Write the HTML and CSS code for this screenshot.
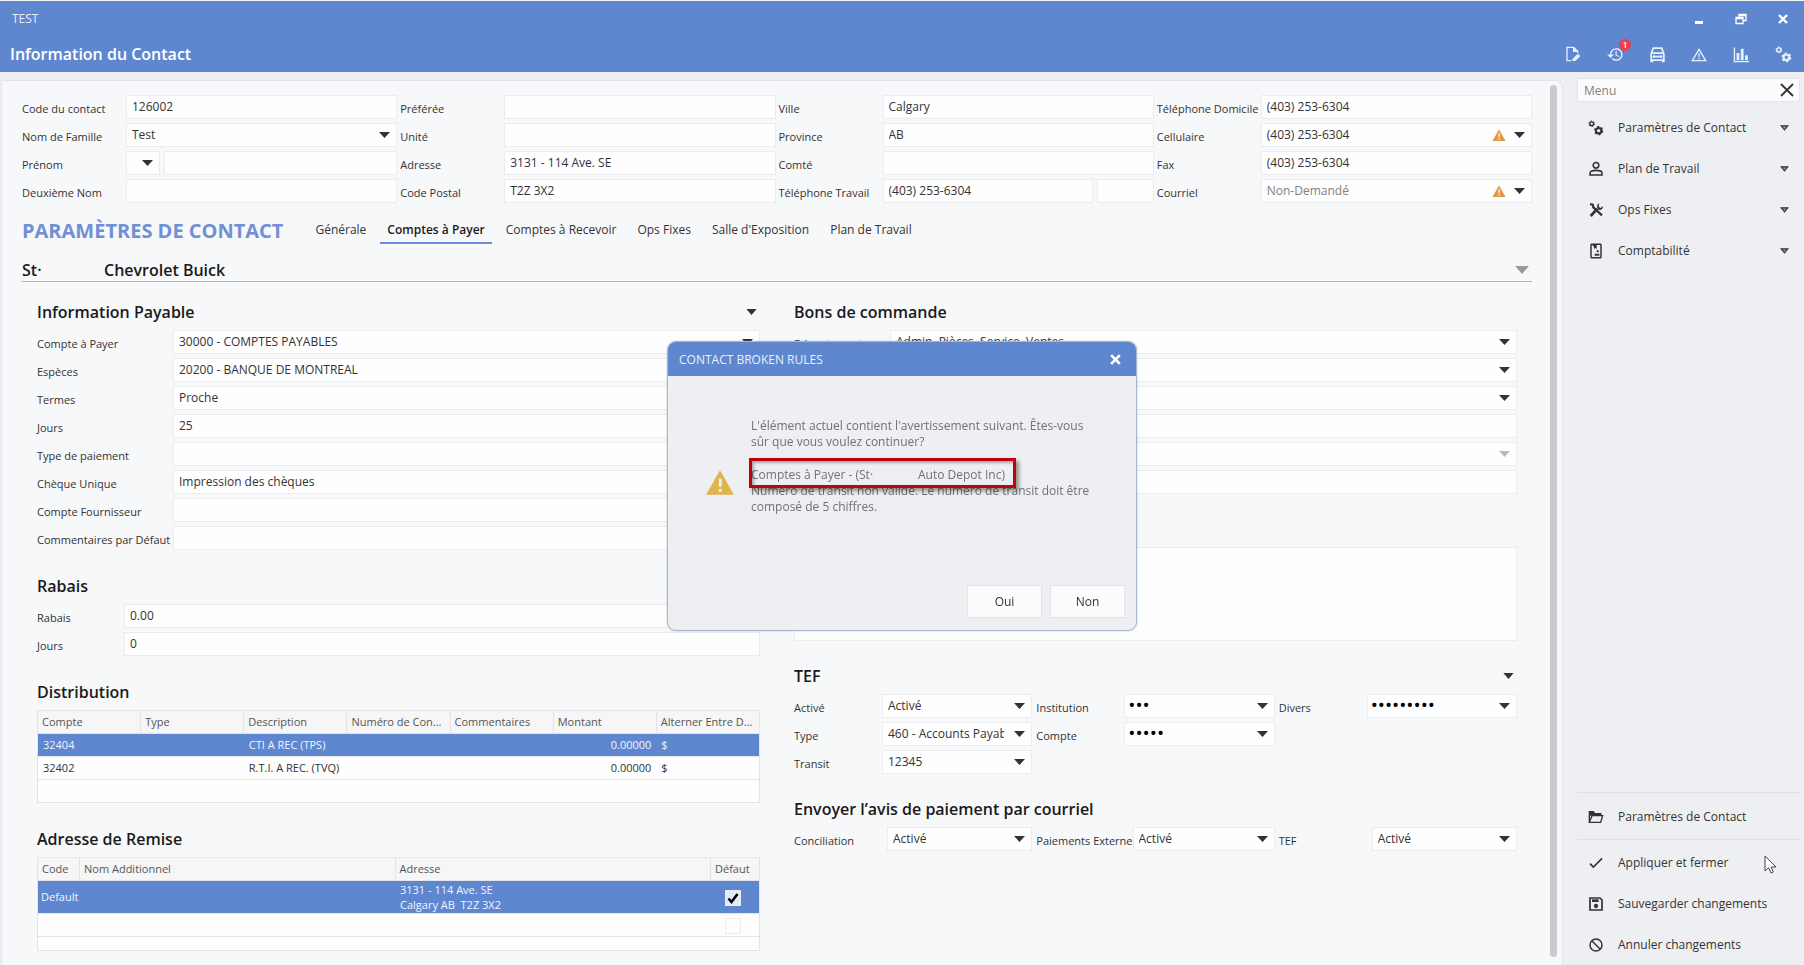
FILE: index.html
```html
<!DOCTYPE html>
<html lang="fr">
<head>
    <meta charset="UTF-8">
    <meta name="viewport" content="width=device-width, initial-scale=1.0">
    <title>Information du Contact</title>
    <link rel="stylesheet" href="styles.css">
</head>
<body>

    <svg class="sprite" aria-hidden="true">
        <symbol id="i-gears" viewBox="0 0 24 24">
            <g fill="none" stroke="currentColor">
                <circle cx="5.500" cy="5.500" r="2.800" stroke-width="2"/>
                <circle cx="5.500" cy="5.500" r="4" stroke-width="1.600" stroke-dasharray="2.100 2.090"/>
                <circle cx="16" cy="16" r="4" stroke-width="3"/>
                <circle cx="16" cy="16" r="6" stroke-width="2" stroke-dasharray="3.300 2.980"/>
            </g>
        </symbol>
        <symbol id="i-warn" viewBox="0 0 24 22">
            <path fill="currentColor" fill-rule="evenodd" d="M12 1L24 22H0zM11 8v7h2.400V8zm0 9v2.400h2.400V17z"/>
        </symbol>
        <symbol id="i-close" viewBox="0 0 12 12">
            <path d="M2 2l8 8M10 2l-8 8" fill="none" stroke="currentColor" stroke-width="2.400"/>
        </symbol>
        <symbol id="i-caret" viewBox="0 0 12 7">
            <path d="M0 0h12L6 7z" fill="currentColor"/>
        </symbol>
        <symbol id="i-caret-open" viewBox="0 0 10 7">
            <path d="M1.200 1h7.600L5 5.600z" fill="#999" stroke="currentColor" stroke-width="1.400"/>
        </symbol>
    </svg>

    <header class="app-header">
        <div class="title-bar">
            <span>TEST</span>
            <div class="bar-buttons">
                <button type="button" aria-label="Réduire"><svg width="12" height="12" viewBox="0 0 12 12"><path d="M2 8h8v3H2z" fill="currentColor"/></svg></button>
                <button type="button" aria-label="Restaurer"><svg width="12" height="12" viewBox="0 0 12 12"><path d="M4 4V1.500h7v6H8M4 2.500h7M1 4.500h7v6H1zM1 5.500h7" fill="none" stroke="currentColor" stroke-width="1.300"/></svg></button>
                <button type="button" aria-label="Fermer"><svg width="12" height="12"><use href="#i-close"/></svg></button>
            </div>
        </div>
        <div class="page-bar">
            <h1>Information du Contact</h1>
            <div class="bar-buttons">
                <button type="button" aria-label="Note"><svg width="16" height="16" viewBox="0 0 24 24"><path d="M9 22H3V2h10l6 6v3M11 22l1-2 7-7" fill="none" stroke="currentColor" stroke-width="2"/><path d="M12 1l8 8h-8zM12 23l1-4 7-7 3 3-7 7z" fill="currentColor"/></svg></button>
                <button type="button" aria-label="Historique"><svg width="17" height="17" viewBox="0 0 24 24"><path fill="currentColor" d="M13 3a9 9 0 0 0-9 9H0l5 5 5-5H6a7 7 0 1 1 2.050 4.950l-1.400 1.400A9 9 0 1 0 13 3zm-1 4v6l4.500 2.700.8-1.300-3.600-2.200V7z"/></svg><span class="badge">1</span></button>
                <button type="button" aria-label="Véhicules"><svg width="17" height="17" viewBox="0 0 24 24"><g fill="none" stroke="currentColor" stroke-width="2.400"><path d="M3 11l3-8h12l3 8v9H3zM3 10h18M8 15h8"/><path d="M4 19v4M20 19v4" stroke-width="4"/></g><circle cx="7" cy="15" r="2" fill="currentColor"/><circle cx="17" cy="15" r="2" fill="currentColor"/></svg></button>
                <button type="button" aria-label="Alertes"><svg width="16" height="16" viewBox="0 0 24 24"><path d="M12 5L22 22H2zM12 11v6M12 18v2" fill="none" stroke="currentColor" stroke-width="2"/></svg></button>
                <button type="button" aria-label="Rapports"><svg width="17" height="17" viewBox="0 0 24 24"><path d="M2 2v20h21" fill="none" stroke="currentColor" stroke-width="2"/><path d="M5 10h4v10H5zM11 4h4v16h-4zM17 13h4v7h-4z" fill="currentColor"/></svg></button>
                <button type="button" aria-label="Paramètres"><svg width="17" height="17"><use href="#i-gears"/></svg></button>
            </div>
        </div>
    </header>

    <div class="layout">
        <main class="panel">
            <div class="content">

                <form class="contact-form">
                    <div class="field"><label for="code">Code du contact</label><input id="code" type="text" value="126002"></div>
                    <div class="field"><label for="pref">Préférée</label><input id="pref" type="text"></div>
                    <div class="field"><label for="ville">Ville</label><input id="ville" type="text" value="Calgary"></div>
                    <div class="field"><label for="teldom">Téléphone Domicile</label><input id="teldom" type="text" value="(403) 253-6304"></div>

                    <div class="field"><label for="nom">Nom de Famille</label><select id="nom"><option>Test</option></select></div>
                    <div class="field"><label for="unite">Unité</label><input id="unite" type="text"></div>
                    <div class="field"><label for="prov">Province</label><input id="prov" type="text" value="AB"></div>
                    <div class="field"><label for="cell">Cellulaire</label><div class="combo"><select id="cell"><option>(403) 253-6304</option></select><svg class="combo-warn" width="14" height="12"><use href="#i-warn"/></svg></div></div>

                    <div class="field"><label for="prenom">Prénom</label><div class="pair pair-title"><select aria-label="Titre"><option></option></select><input id="prenom" type="text"></div></div>
                    <div class="field"><label for="adr">Adresse</label><input id="adr" type="text" value="3131 - 114 Ave. SE"></div>
                    <div class="field"><label for="comte">Comté</label><input id="comte" type="text"></div>
                    <div class="field"><label for="fax">Fax</label><input id="fax" type="text" value="(403) 253-6304"></div>

                    <div class="field"><label for="nom2">Deuxième Nom</label><input id="nom2" type="text"></div>
                    <div class="field"><label for="cp">Code Postal</label><input id="cp" type="text" value="T2Z 3X2"></div>
                    <div class="field"><label for="teltrav">Téléphone Travail</label><div class="pair pair-phone"><input id="teltrav" type="text" value="(403) 253-6304"><input type="text" aria-label="Poste"></div></div>
                    <div class="field"><label for="courriel">Courriel</label><div class="combo"><select id="courriel" class="muted"><option>Non-Demandé</option></select><svg class="combo-warn" width="14" height="12"><use href="#i-warn"/></svg></div></div>
                </form>

                <div class="tabs-row">
                    <h2>PARAMÈTRES DE CONTACT</h2>
                    <nav class="tabs">
                        <a href="#generale">Générale</a>
                        <a href="#payer" class="active">Comptes à Payer</a>
                        <a href="#recevoir">Comptes à Recevoir</a>
                        <a href="#ops">Ops Fixes</a>
                        <a href="#salle">Salle d'Exposition</a>
                        <a href="#plan">Plan de Travail</a>
                    </nav>
                </div>

                <div class="dealer">
                    <span class="dealer-prefix">St·</span>
                    <span class="dealer-name">Chevrolet Buick</span>
                    <button type="button" class="caret-btn" aria-label="Choisir"><svg width="14" height="8"><use href="#i-caret"/></svg></button>
                </div>

                <div class="columns">
                    <div class="column">
                        <section class="wide-labels">
                            <div class="section-head">
                                <h3>Information Payable</h3>
                                <button type="button" class="caret-btn" aria-label="Options"><svg width="11" height="6"><use href="#i-caret"/></svg></button>
                            </div>
                            <div class="rows">
                                <div class="field"><label for="cap">Compte à Payer</label><select id="cap"><option>30000 - COMPTES PAYABLES</option></select></div>
                                <div class="field"><label for="esp">Espèces</label><select id="esp"><option>20200 - BANQUE DE MONTREAL</option></select></div>
                                <div class="field"><label for="termes">Termes</label><select id="termes"><option>Proche</option></select></div>
                                <div class="field"><label for="jours">Jours</label><input id="jours" type="text" value="25"></div>
                                <div class="field"><label for="typep">Type de paiement</label><select id="typep"><option></option></select></div>
                                <div class="field"><label for="cheque">Chèque Unique</label><select id="cheque"><option>Impression des chèques</option></select></div>
                                <div class="field"><label for="fourn">Compte Fournisseur</label><input id="fourn" type="text"></div>
                                <div class="field"><label for="comm">Commentaires par Défaut</label><input id="comm" type="text"></div>
                            </div>
                        </section>

                        <section class="short-labels">
                            <div class="section-head"><h3>Rabais</h3></div>
                            <div class="rows">
                                <div class="field"><label for="rabais">Rabais</label><input id="rabais" type="text" value="0.00"></div>
                                <div class="field"><label for="rjours">Jours</label><input id="rjours" type="text" value="0"></div>
                            </div>
                        </section>

                        <section>
                            <div class="section-head"><h3>Distribution</h3></div>
                            <table>
                                <thead>
                                    <tr><th>Compte</th><th>Type</th><th>Description</th><th>Numéro de Con...</th><th>Commentaires</th><th>Montant</th><th>Alterner Entre D...</th></tr>
                                </thead>
                                <tbody>
                                    <tr class="selected"><td>32404</td><td></td><td>CTI A REC (TPS)</td><td></td><td></td><td class="num">0.00000</td><td>$</td></tr>
                                    <tr><td>32402</td><td></td><td>R.T.I. A REC. (TVQ)</td><td></td><td></td><td class="num">0.00000</td><td>$</td></tr>
                                    <tr><td></td><td></td><td></td><td></td><td></td><td></td><td></td></tr>
                                </tbody>
                            </table>
                        </section>

                        <section>
                            <div class="section-head"><h3>Adresse de Remise</h3></div>
                            <table class="addresses">
                                <colgroup><col class="col-code"><col><col><col class="col-check"></colgroup>
                                <thead>
                                    <tr><th>Code</th><th>Nom Additionnel</th><th>Adresse</th><th>Défaut</th></tr>
                                </thead>
                                <tbody>
                                    <tr class="selected"><td>Default</td><td></td><td>3131 - 114 Ave. SE<br>Calgary AB&nbsp; T2Z 3X2</td><td class="check"><input type="checkbox" aria-label="Adresse par défaut" checked></td></tr>
                                    <tr><td></td><td></td><td></td><td class="check"><input type="checkbox" aria-label="Adresse par défaut"></td></tr>
                                    <tr class="partial"><td></td><td></td><td></td><td></td></tr>
                                </tbody>
                            </table>
                        </section>
                    </div>

                    <div class="column column-right">
                        <section class="medium-labels">
                            <div class="section-head"><h3>Bons de commande</h3></div>
                            <div class="rows">
                                <div class="field"><label for="dep">Département</label><select id="dep"><option>Admin, Pièces, Service, Ventes</option></select></div>
                                <div class="field"><span></span><select aria-label="Priorité"><option></option></select></div>
                                <div class="field"><span></span><select aria-label="Expédition"><option></option></select></div>
                                <div class="field"><span></span><input type="text" aria-label="Référence"></div>
                                <div class="field"><span></span><select aria-label="Approbation" disabled><option></option></select></div>
                                <div class="field"><span></span><input type="text" aria-label="Limite"></div>
                            </div>
                            <textarea class="notes" aria-label="Notes"></textarea>
                        </section>

                        <section class="tef">
                            <div class="section-head">
                                <h3>TEF</h3>
                                <button type="button" class="caret-btn" aria-label="Options"><svg width="11" height="6"><use href="#i-caret"/></svg></button>
                            </div>
                            <div class="triple">
                                <div class="field"><label for="tactive">Activé</label><select id="tactive"><option>Activé</option></select></div>
                                <div class="field"><label for="inst">Institution</label><input id="inst" class="secret" type="password" value="123"></div>
                                <div class="field"><label for="divers">Divers</label><input id="divers" class="secret" type="password" value="123456789"></div>
                                <div class="field"><label for="ttype">Type</label><select id="ttype"><option>460 - Accounts Payable</option></select></div>
                                <div class="field"><label for="tcompte">Compte</label><input id="tcompte" class="secret" type="password" value="12345"></div>
                                <span></span>
                                <div class="field"><label for="transit">Transit</label><select id="transit"><option>12345</option></select></div>
                            </div>
                        </section>

                        <section class="notice">
                            <div class="section-head"><h3>Envoyer l’avis de paiement par courriel</h3></div>
                            <div class="triple">
                                <div class="field"><label for="conc">Conciliation</label><select id="conc"><option>Activé</option></select></div>
                                <div class="field"><label for="paie">Paiements Externe</label><select id="paie"><option>Activé</option></select></div>
                                <div class="field"><label for="ntef">TEF</label><select id="ntef"><option>Activé</option></select></div>
                            </div>
                        </section>
                    </div>
                </div>
            </div>
            <div class="scrollbar"></div>
        </main>

        <aside class="sidebar">
            <div class="menu-search">
                <input type="text" placeholder="Menu" aria-label="Menu">
                <button type="button" aria-label="Effacer"><svg width="14" height="14" viewBox="0 0 14 14"><path d="M1 1l12 12M13 1L1 13" fill="none" stroke="currentColor" stroke-width="1.800"/></svg></button>
            </div>
            <nav class="menu">
                <a href="#parametres"><svg width="16" height="16"><use href="#i-gears"/></svg><span>Paramètres de Contact</span><svg width="9" height="6"><use href="#i-caret-open"/></svg></a>
                <a href="#travail"><svg width="16" height="16" viewBox="0 0 24 24"><g fill="none" stroke="currentColor" stroke-width="2.400"><circle cx="12" cy="6.500" r="4.200"/><path d="M3 21v-3c0-3 4-4 9-4s9 1 9 4v3z"/></g></svg><span>Plan de Travail</span><svg width="9" height="6"><use href="#i-caret-open"/></svg></a>
                <a href="#opsfixes"><svg width="16" height="16" viewBox="0 0 24 24"><path d="M3 3l4 1 1 4 13 12" fill="none" stroke="currentColor" stroke-width="3.400"/><path d="M14 10L4 21" stroke="currentColor" stroke-width="4"/><path d="M17 2c-5 2-4 9 0 10 3 0 6-2 5-6l-3 3-3-2z" fill="currentColor"/></svg><span>Ops Fixes</span><svg width="9" height="6"><use href="#i-caret-open"/></svg></a>
                <a href="#compta"><svg width="16" height="16" viewBox="0 0 24 24"><rect x="4.500" y="2" width="15" height="20" rx="1" fill="none" stroke="currentColor" stroke-width="2.200"/><path d="M7 3h6v6l-2-1.500L9 9V5H7zM13 11h3v3h-3zM10 16h7v3h-7z" fill="currentColor"/></svg><span>Comptabilité</span><svg width="9" height="6"><use href="#i-caret-open"/></svg></a>
            </nav>
            <nav class="menu menu-context">
                <a href="#dossier"><svg width="16" height="16" viewBox="0 0 24 24"><path d="M2 20V4h6l2 3h9v3M2 20h17l3-10H6L2 20z" fill="none" stroke="currentColor" stroke-width="2"/><path d="M2 4h6l2 3h10v3H2z" fill="currentColor"/></svg><span>Paramètres de Contact</span></a>
            </nav>
            <nav class="menu menu-actions">
                <a href="#appliquer"><svg width="16" height="16" viewBox="0 0 24 24"><path d="M3 13l5 5L21 5" fill="none" stroke="currentColor" stroke-width="2.400"/></svg><span>Appliquer et fermer</span></a>
                <a href="#sauvegarder"><svg width="16" height="16" viewBox="0 0 24 24"><path d="M3 3h15l3 3v15H3z" fill="none" stroke="currentColor" stroke-width="2.600"/><path d="M6 5h10v4H6z" fill="currentColor"/><circle cx="12" cy="15" r="3.200" fill="currentColor"/></svg><span>Sauvegarder changements</span></a>
                <a href="#annuler"><svg width="16" height="16" viewBox="0 0 24 24"><circle cx="12" cy="12" r="9" fill="none" stroke="currentColor" stroke-width="2.200"/><path d="M6 6l12 12" stroke="currentColor" stroke-width="2.200"/></svg><span>Annuler changements</span></a>
            </nav>
        </aside>
    </div>

    <div class="overlay">
        <div class="dialog" role="dialog" aria-labelledby="dialog-title">
            <div class="dialog-head">
                <span id="dialog-title">CONTACT BROKEN RULES</span>
                <button type="button" aria-label="Fermer"><svg width="13" height="13"><use href="#i-close"/></svg></button>
            </div>
            <div class="dialog-body">
                <svg class="dialog-warn" width="28" height="26"><use href="#i-warn"/></svg>
                <div class="message">
                    <p>L'élément actuel contient l'avertissement suivant. Êtes-vous<br>sûr que vous voulez continuer?</p>
                    <p class="highlight"><span class="account">Comptes à Payer - (St·</span><span>Auto Depot Inc)</span></p>
                    <p>Numéro de transit non valide. Le numéro de transit doit être<br>composé de 5 chiffres.</p>
                </div>
            </div>
            <div class="dialog-actions">
                <button type="button">Oui</button>
                <button type="button">Non</button>
            </div>
        </div>
    </div>

    <svg class="cursor" width="13" height="19" viewBox="0 0 13 19" aria-hidden="true"><path d="M1 1v15l3.500-3.300L7 18l2.300-1L7 12h5z" fill="#fff" stroke="#444"/></svg>

</body>
</html>
```

FILE: styles.css
```css
:root {
    --blue: #5f87cf;
    --bg: #eeeff3;
    --panel-bg: #f7f8fa;
    --field-border: #ececee;
    --text: #333;
    --text-strong: #1a1a1a;
    --row-line: #e4e4e6;
}

*, *::before, *::after {
    box-sizing: border-box;
    margin: 0;
    padding: 0;
}

body {
    font-family: "Segoe UI", "Open Sans", "Noto Sans", sans-serif;
    font-size: 12px;
    background: var(--bg);
    color: var(--text);
    height: 100vh;
    overflow: hidden;
    display: flex;
    flex-direction: column;
}

button {
    font: inherit;
    color: inherit;
    border: none;
    background: none;
    cursor: pointer;
}

a {
    color: inherit;
    text-decoration: none;
}

.sprite {
    display: none;
}

/* header */

.app-header {
    background: var(--blue);
    color: #e8effc;
    border-top: 1px solid #f4f6fa;
    flex-shrink: 0;
}

.title-bar, .page-bar {
    display: flex;
    justify-content: space-between;
    align-items: center;
    height: 36px;
}

.title-bar {
    height: 35px;
    padding-left: 12px;
}

.title-bar .bar-buttons {
    color: #fff;
}

.page-bar {
    padding-left: 10px;
}

h1 {
    font-size: 16px;
    font-weight: 600;
    color: #fff;
}

.bar-buttons {
    display: flex;
}

.bar-buttons button {
    position: relative;
    width: 42px;
    height: 34px;
    display: flex;
    align-items: center;
    justify-content: center;
}

.badge {
    position: absolute;
    top: 2px;
    right: 5px;
    width: 12px;
    height: 12px;
    border-radius: 50%;
    background: #ee3f48;
    color: #fff;
    font-size: 8px;
    font-weight: 600;
    line-height: 12px;
}

/* layout */

.layout {
    display: flex;
    flex: 1;
    min-height: 0;
}

.panel {
    flex: 1;
    min-width: 0;
    display: flex;
    margin: 8px 0 0 1px;
    background: var(--panel-bg);
    border: 1px solid #e3e4e9;
    border-bottom: none;
    border-radius: 0 8px 0 0;
}

.content {
    flex: 1;
    min-width: 0;
    padding: 14px 18px 0 20px;
}

.scrollbar {
    width: 7px;
    margin: 4px 5px 8px 0;
    border-radius: 4px;
    background: #cbcbcb;
}

/* fields */

.field {
    display: grid;
    grid-template-columns: minmax(var(--label-width), max-content) minmax(0, 1fr);
    align-items: center;
}

.field label {
    font-size: 11px;
    line-height: 16px;
    padding-top: 4px;
    white-space: nowrap;
}

input, select, textarea {
    font: inherit;
    color: var(--text);
    width: 100%;
    height: 24px;
    padding: 0 5px 2px;
    border: 1px solid var(--field-border);
    border-radius: 0;
    background-color: #fefefe;
    outline: none;
}

select, .secret {
    appearance: none;
    padding-right: 27px;
    text-overflow: clip;
    background-image: url("data:image/svg+xml,%3Csvg xmlns='http://www.w3.org/2000/svg' viewBox='0 0 11 6'%3E%3Cpath d='M0 0h11L5.500 6z' fill='%23333'/%3E%3C/svg%3E");
    background-repeat: no-repeat;
    background-size: 11px 6px;
    background-position: right 6px center;
}

select:disabled {
    opacity: 1;
    background-image: url("data:image/svg+xml,%3Csvg xmlns='http://www.w3.org/2000/svg' viewBox='0 0 11 6'%3E%3Cpath d='M0 0h11L5.500 6z' fill='%23bbb'/%3E%3C/svg%3E");
}

select.muted {
    color: #808080;
}

.secret {
    color: #000;
    font-size: 19px;
    padding-left: 3px;
}

.combo {
    position: relative;
}

.combo-warn {
    position: absolute;
    right: 26px;
    top: 6px;
    color: #e3953f;
}

.pair {
    display: grid;
    gap: 4px;
}

.pair-title {
    grid-template-columns: 34px 1fr;
}

.pair-title select {
    padding: 0;
}

.pair-phone {
    grid-template-columns: 1fr 57px;
}

.contact-form {
    --label-width: 104px;
    display: grid;
    grid-template-columns: repeat(4, minmax(0, 1fr));
    gap: 4px 3px;
}

/* tabs */

.tabs-row {
    display: flex;
    align-items: center;
    gap: 25px;
    height: 28px;
    margin-top: 13px;
}

h2 {
    font-size: 20px;
    font-weight: 700;
    color: #7190d4;
    white-space: nowrap;
}

.tabs {
    display: flex;
    align-self: stretch;
    gap: 7px;
}

.tabs a {
    padding: 5px 7px 0;
    border-bottom: 2px solid transparent;
    white-space: nowrap;
}

.tabs a.active {
    font-weight: 600;
    color: var(--text-strong);
    border-bottom-color: #6a8fdc;
}

.dealer {
    display: flex;
    align-items: center;
    margin-top: 14px;
    height: 24px;
    padding-right: 3px;
    border-bottom: 1px solid #b4b5b8;
    font-size: 16px;
    font-weight: 600;
    color: var(--text-strong);
}

.dealer-prefix {
    width: 82px;
}

.caret-btn {
    display: flex;
    margin-left: auto;
}

.dealer .caret-btn {
    color: #999;
}

/* sections */

.columns {
    display: grid;
    grid-template-columns: repeat(2, minmax(0, 1fr));
    gap: 34px;
    margin-top: 18px;
    padding: 0 15px;
}

.column {
    display: flex;
    flex-direction: column;
    gap: 24px;
}

.column-right {
    gap: 23px;
}

.section-head {
    display: flex;
    align-items: center;
    height: 24px;
    margin-bottom: 6px;
    padding-right: 3px;
}

h3 {
    font-size: 16px;
    font-weight: 600;
    color: var(--text-strong);
}

.rows {
    display: grid;
    gap: 4px;
}

.wide-labels {
    --label-width: 136px;
}

.short-labels {
    --label-width: 87px;
}

.medium-labels {
    --label-width: 96px;
}

.notes {
    display: block;
    height: 94px;
    margin-top: 53px;
    resize: none;
}

.triple {
    display: grid;
    grid-template-columns: repeat(3, minmax(0, 1fr));
    gap: 4px;
}

.tef {
    --label-width: 88px;
}

.notice {
    --label-width: 93px;
}

/* tables */

table {
    width: 100%;
    table-layout: fixed;
    border-collapse: collapse;
    border: 1px solid var(--row-line);
    background: #fefefe;
    font-size: 11px;
    line-height: 16px;
}

th, td {
    height: 23px;
    padding: 0 5px;
    text-align: left;
    white-space: nowrap;
}

th {
    font-weight: 400;
    color: #555;
    background: #f6f6f7;
    border: 1px solid var(--row-line);
    padding: 0 4px;
}

tbody tr {
    border-top: 1px solid var(--row-line);
}

tr.selected {
    background: var(--blue);
    color: #f0f5ff;
}

td.num {
    text-align: right;
}

.col-code {
    width: 42px;
}

.col-check {
    width: 49px;
}

.addresses td {
    padding: 0 3px;
}

.addresses td:nth-child(3) {
    padding: 0 5px;
    line-height: 15px;
}

.addresses tr.selected td {
    height: 33px;
}

.addresses tr.partial td {
    height: 14px;
}

.addresses td.check {
    padding: 0 7px 0 3px;
    text-align: center;
}

input[type="checkbox"] {
    appearance: none;
    width: 16px;
    height: 16px;
    padding: 0;
    vertical-align: middle;
}

input[type="checkbox"]:checked {
    background: #e3ebfa url("data:image/svg+xml,%3Csvg xmlns='http://www.w3.org/2000/svg' viewBox='0 0 14 14'%3E%3Cpath d='M2.500 7.500L5.500 11 11.500 3' fill='none' stroke='%23000' stroke-width='2.500'/%3E%3C/svg%3E") center / 14px no-repeat;
}

/* sidebar */

.sidebar {
    width: 241px;
    flex-shrink: 0;
    display: flex;
    flex-direction: column;
    padding: 6px 4px 0 14px;
}

.menu-search {
    display: flex;
    align-items: center;
    height: 24px;
    flex-shrink: 0;
    padding-right: 5px;
    margin-bottom: 5px;
    background: #fcfcfc;
    border: 1px solid #e4e5e9;
}

.menu-search input {
    flex: 1;
    border: none;
    background: none;
    height: 22px;
    padding: 0 6px;
}

.menu-search input::placeholder {
    color: #808080;
}

.menu-search button {
    display: flex;
}

.menu a {
    display: grid;
    grid-template-columns: 16px 1fr auto;
    align-items: center;
    gap: 14px;
    height: 41px;
    padding: 0 11px;
}

.menu-context {
    margin-top: auto;
    padding: 3px 0 2px;
    border-top: 1px solid #dfe0e4;
    border-bottom: 1px solid #dfe0e4;
}

.menu-actions {
    padding-top: 2px;
}

/* dialog */

.overlay {
    position: fixed;
    inset: 0;
    display: flex;
    align-items: center;
    justify-content: center;
    padding-top: 7px;
}

.dialog {
    width: 470px;
    background: var(--bg);
    border: 1px solid #a9b7ca;
    border-radius: 9px;
    overflow: hidden;
    box-shadow: 0 0 2px rgba(90, 110, 140, 0.4);
}

.dialog-head {
    display: flex;
    align-items: center;
    justify-content: space-between;
    height: 34px;
    padding: 0 14px 0 11px;
    background: var(--blue);
    color: #e8effc;
}

.dialog-head button {
    display: flex;
    color: #fff;
}

.dialog-body {
    display: flex;
    align-items: center;
    gap: 17px;
    height: 209px;
    padding: 0 12px 28px 38px;
}

.dialog-warn {
    color: #dfb44c;
    margin-top: 30px;
}

.message {
    color: #707174;
    line-height: 16px;
    white-space: nowrap;
}

.highlight {
    position: relative;
    display: flex;
    width: 265px;
    margin-top: 17px;
}

/* red frame sits over the neighbouring lines */
.highlight::after {
    content: '';
    position: absolute;
    inset: -9px 0 -5px -2px;
    border: 3px solid #c4000c;
    box-shadow: 3px 3px 4px rgba(0, 0, 0, 0.4), inset 2px 2px 3px rgba(0, 0, 0, 0.3);
}

.account {
    width: 167px;
}

.dialog-actions {
    display: flex;
    justify-content: flex-end;
    gap: 8px;
    padding: 0 11px 12px;
}

.dialog-actions button {
    width: 75px;
    height: 33px;
    background: #fcfcfc;
    border: 1px solid #e2e3e8;
}

.cursor {
    position: fixed;
    right: 27px;
    bottom: 91px;
}
```
